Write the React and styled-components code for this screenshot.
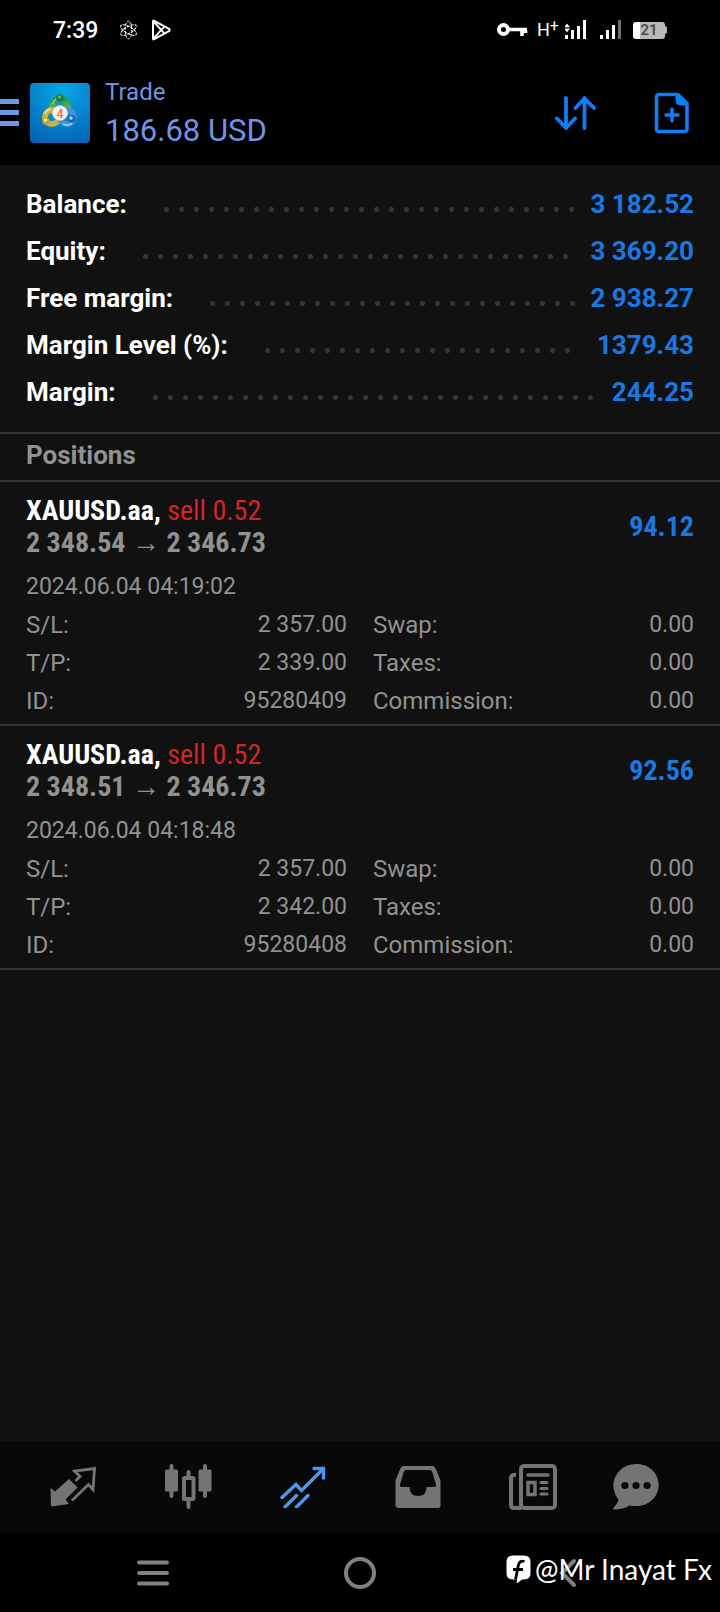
import React from "react";
import styled, { createGlobalStyle } from "styled-components";

const GlobalStyle = createGlobalStyle`
  * {
    box-sizing: border-box;
  }
  body {
    margin: 0;
    background: #111111;
    font-family: Roboto, "Noto Sans", sans-serif;
  }
  h1, h2, h3, p, dl, dd {
    margin: 0;
    font-size: inherit;
    font-weight: inherit;
  }
  svg {
    display: block;
    flex: none;
  }
`;

const Screen = styled.div`
  display: flex;
  flex-direction: column;
  min-height: 100vh;
  color: #929292;
`;

const StatusBar = styled.div`
  display: flex;
  justify-content: space-between;
  height: 60px;
  padding: 0 53px;
  background: #000;
  color: #fff;
`;

const StatusGroup = styled.div`
  display: flex;
  align-items: center;
  gap: ${({ $gap }) => $gap}px;
`;

const Clock = styled.time`
  margin-right: 8px;
  font-size: 23px;
  font-weight: 500;
`;

const NetworkType = styled.span`
  display: flex;
  width: 20px;
  font-size: 18px;
  line-height: 24px;
  sup {
    font-size: 16px;
    line-height: 16px;
  }
`;

const Battery = styled.span`
  display: flex;
  align-items: center;
  width: 36px;
  padding-left: 2px;
`;

const BatteryBody = styled.span`
  width: 32px;
  height: 17px;
  border-radius: 3px;
  background: linear-gradient(90deg, #fff 21%, #b9b9b9 21%);
  color: #4a4a4a;
  font-size: 15px;
  font-weight: 600;
  line-height: 17px;
  text-align: center;
`;

const BatteryTip = styled.span`
  width: 2px;
  height: 8px;
  border-radius: 0 2px 2px 0;
  background: #b9b9b9;
`;

const Header = styled.header`
  display: flex;
  align-items: center;
  height: 105px;
  padding-right: 24px;
  background: #000;
  color: #6f95e6;
`;

const IconButton = styled.button`
  display: flex;
  align-items: center;
  justify-content: center;
  padding: 0;
  border: 0;
  background: none;
  color: inherit;
  cursor: pointer;
`;

const Account = styled.div`
  display: flex;
  flex-direction: column;
  gap: 6px;
  margin: 2px 0 0 15px;
`;

const Title = styled.h1`
  font-size: 24px;
  line-height: 28px;
`;

const Profit = styled.p`
  font-size: 31px;
  line-height: 38px;
  white-space: nowrap;
`;

const Actions = styled.div`
  display: flex;
  gap: 49px;
  margin-left: auto;
  color: #0f7df5;
  ${IconButton} {
    width: 48px;
    height: 48px;
  }
`;

const Logo = styled.svg`
  margin-left: 11px;
  border-radius: 4px;
`;

const Content = styled.main`
  flex: 1;
`;

const Summary = styled.dl`
  padding: 16px 26px;
  border-bottom: 2px solid #343434;
`;

const SummaryRow = styled.div`
  display: flex;
  align-items: center;
  font-size: 26px;
  font-weight: 700;
  line-height: 47px;
  white-space: nowrap;
  dt {
    color: #fff;
  }
  dd {
    color: #1a78e2;
  }
`;

const Leader = styled.span`
  flex: 1;
  margin: 10px 10px 0 32px;
  &::before {
    content: "";
    display: block;
    width: round(down, 100%, 15px);
    height: 5px;
    background: radial-gradient(circle, #363636 2px, transparent 3px) 0 0 / 15px 5px;
  }
`;

const SectionTitle = styled.h2`
  height: 48px;
  padding: 0 26px;
  border-bottom: 2px solid #343434;
  font-size: 26px;
  font-weight: 700;
  line-height: 43px;
`;

const PositionCard = styled.article`
  padding: 13px 26px 4px;
  border-bottom: 2px solid #343434;
`;

const PositionHead = styled.div`
  display: flex;
  align-items: center;
  justify-content: space-between;
  margin-bottom: 9px;
  font-family: "Roboto Condensed", Roboto, sans-serif;
  font-size: 28px;
  font-weight: 700;
  line-height: 32px;
`;

const SymbolName = styled.h3`
  color: #fff;
`;

const Side = styled.span`
  color: #d32626;
  font-weight: 400;
`;

const Result = styled.p`
  color: #1a78e2;
`;

const OpenTime = styled.time`
  display: block;
  font-size: 23px;
  line-height: 38px;
`;

const Details = styled.dl`
  display: grid;
  grid-template-columns: 1fr 1fr;
  column-gap: 26px;
  font-size: 23px;
  line-height: 38px;
  div {
    display: flex;
    justify-content: space-between;
  }
  dt {
    font-size: 24px;
  }
`;

const TabBar = styled.nav`
  display: grid;
  grid-template-columns: repeat(5, 5fr) 4fr;
  height: 92px;
  padding: 0 38px 0 15px;
  background: #080808;
`;

const Tab = styled(IconButton)`
  color: ${({ $active }) => ($active ? "#4a98ee" : "#747474")};
`;

const SystemBar = styled.div`
  position: relative;
  display: flex;
  align-items: center;
  justify-content: space-between;
  height: 79px;
  padding: 0 135px;
  background: #000;
  color: #808080;
`;

const Watermark = styled.div`
  position: absolute;
  top: 20px;
  right: 8px;
  display: flex;
  align-items: center;
  gap: 4px;
  color: #fff;
  font-family: Lato, sans-serif;
  font-size: 28px;
  line-height: 32px;
  white-space: nowrap;
`;

const AtomIcon = () => (
  <svg width="17" height="20" viewBox="0 0 17 20" fill="none" stroke="#fff">
    <ellipse cx="8.5" cy="10" rx="3.4" ry="8.8" strokeDasharray="3 1" />
    <ellipse cx="8.5" cy="10" rx="3.4" ry="8.8" transform="rotate(60 8.5 10)" strokeDasharray="3 1" />
    <ellipse cx="8.5" cy="10" rx="3.4" ry="8.8" transform="rotate(-60 8.5 10)" strokeDasharray="3 1" />
  </svg>
);

const PlayIcon = () => (
  <svg width="20" height="22" viewBox="0 0 20 22" fill="none" stroke="#fff" strokeWidth="2" strokeLinejoin="round">
    <path d="M2 2.4v17.2q0 1.2 1.2.6L18 12.2q1.4-1.2 0-2.4L3.2 1.8Q2 1.2 2 2.4z" />
    <path d="M2.4 2.4 13.6 14.6M2.4 19.6 13.6 7.4" />
  </svg>
);

const KeyIcon = () => (
  <svg width="32" height="16" viewBox="0 0 32 16" fill="none" stroke="#fff">
    <circle cx="6.5" cy="7.5" r="4.5" strokeWidth="4" />
    <path d="M11 7.5h19M25 8v6M28.5 8v3" strokeWidth="3.6" />
  </svg>
);

const DataSignalIcon = () => (
  <svg width="22" height="20" viewBox="0 0 22 20" fill="#fff">
    <path d="M0 15h3v4H0zM6 10h3v9H6zM12 6h3v13h-3zM18 0h3v19h-3z" />
    <path d="M-1 7.2 2 3.5l3 3.7zM-1 8.6 2 12.2l3-3.6z" />
  </svg>
);

const SignalIcon = () => (
  <svg width="28" height="20" viewBox="0 0 28 20" fill="#fff">
    <path d="M5 15h3v4H5zM11 10h3v9h-3zM17 5h3v14h-3z" />
    <path fill="#6d6d6d" d="M23 0h3v19h-3z" />
  </svg>
);

const MenuIcon = () => (
  <svg width="19" height="27" viewBox="0 0 19 27" fill="currentColor">
    <path d="M0 0h19v5H0zM0 11h19v5H0zM0 22h19v5H0z" />
  </svg>
);

const LogoIcon = () => (
  <Logo width="60" height="60" viewBox="0 0 60 60" fill="none">
    <defs>
      <radialGradient id="sky" cx="0.55" cy="0.1" r="1">
        <stop offset="0" stopColor="#06a9e6" />
        <stop offset="1" stopColor="#0561b4" />
      </radialGradient>
      <linearGradient id="green" x2="0" y2="1">
        <stop offset="0" stopColor="#2f9a44" />
        <stop offset="1" stopColor="#8dc85c" />
      </linearGradient>
    </defs>
    <rect width="60" height="60" fill="url(#sky)" />
    <path d="M16 49h28" stroke="#0a6fc4" />
    <circle cx="30" cy="24" r="8" stroke="url(#green)" strokeWidth="6" />
    <circle cx="22" cy="34" r="7" stroke="#c3b546" strokeWidth="6" />
    <circle cx="37" cy="34" r="7" stroke="#3b93d9" strokeWidth="6" />
    <path d="M33 41q6 3 10-2" stroke="#9bd0f5" strokeWidth="1.5" />
    <path d="M15 31q2-5 6-5" stroke="#f1e690" strokeWidth="1.5" />
    <path d="M22.5 21q2-5 6-6" stroke="#a6df9a" strokeWidth="1.2" />
    <circle cx="30" cy="15" r="4" fill="#257f37" />
    <circle cx="29.5" cy="13.8" r="1.6" fill="#62bd64" />
    <circle cx="16" cy="38" r="3.8" fill="#c6a52a" />
    <circle cx="15.5" cy="37" r="1.7" fill="#f6ec9a" />
    <circle cx="42" cy="36" r="3.8" fill="#1b66b5" />
    <circle cx="41" cy="35" r="1.7" fill="#a5dbfa" />
    <circle cx="30" cy="30" r="7.6" fill="#f7f3ec" stroke="#c9c6b0" strokeWidth="0.6" />
    <text x="30" y="34.5" textAnchor="middle" fill="#ee8244" fontFamily="Roboto, sans-serif" fontSize="13" fontWeight="700">4</text>
  </Logo>
);

const SortIcon = () => (
  <svg width="42" height="36" viewBox="0 0 42 36" fill="none" stroke="currentColor" strokeWidth="3.8" strokeLinecap="round" strokeLinejoin="round">
    <path d="M12 3v30M3 23.500l9 9.500 9-9.500M30.500 33V3M21.500 13l9-9.500 9.500 9.500" />
  </svg>
);

const NewOrderIcon = () => (
  <svg width="36" height="42" viewBox="0 0 36 42" fill="none" stroke="currentColor" strokeLinejoin="round">
    <path d="M5 2.500h19l9 9V37a2.500 2.500 0 0 1-2.500 2.500h-26A2.500 2.500 0 0 1 2.500 37V5A2.500 2.500 0 0 1 5 2.500z" strokeWidth="3.600" />
    <path d="M22 3v6q0 4 4 4h7l-9-10z" fill="currentColor" strokeWidth="1" />
    <path d="M18 17v12M12 23h12" strokeWidth="3.400" strokeLinecap="round" />
  </svg>
);

const QuotesIcon = () => (
  <svg width="46" height="40" viewBox="0 0 46 40">
    <path d="M19 12 27.500 20.500 15.500 32.500 19 37 1 39.500.500 21 5 24.500z" fill="currentColor" />
    <path d="M25.500 14 30 9.500 24.500 4 44.500 1.500 43 22.500 38.500 17.500 22 33.500" fill="none" stroke="currentColor" strokeWidth="2.800" />
  </svg>
);

const ChartIcon = () => (
  <svg width="48" height="48" viewBox="0 0 48 48" fill="none" stroke="currentColor">
    <path d="M7.500 3v30M41 3v30M24.500 9v6M24.500 38v6" strokeWidth="4" strokeLinecap="round" />
    <rect x="1" y="6.500" width="13" height="22" rx="1.500" fill="currentColor" stroke="none" />
    <rect x="34.500" y="6.500" width="13" height="22" rx="1.500" fill="currentColor" stroke="none" />
    <rect x="20" y="15" width="9.500" height="21" strokeWidth="4" rx="0.500" />
  </svg>
);

const TradeIcon = () => (
  <svg width="46" height="42" viewBox="0 0 46 42" fill="none" stroke="currentColor" strokeWidth="3.400">
    <path d="M2 31.500 16 18.500 21.500 24.500 42 4" strokeLinecap="round" />
    <path d="M34 2.500h9.500V12" strokeLinecap="round" />
    <path d="M5 41 16.500 29.500M16.500 41 28 29.500" strokeLinecap="round" />
  </svg>
);

const HistoryIcon = () => (
  <svg width="46" height="42" viewBox="0 0 46 42">
    <path
      fill="currentColor"
      fillRule="evenodd"
      d="M9 0h28q2.500 0 3.600 2.400L45 13q.5 1.500.5 3v23q0 3-3 3h-39q-3 0-3-3V16q0-1.500.5-3L5.400 2.400Q6.500 0 9 0zM11 4q-1.500 0-2.200 1.700L5 18.500Q4.600 21 7 21h7.500q0 9 8.500 9t8.500-9H39q2.400 0 2-2.500L37.200 5.700Q36.500 4 35 4z"
    />
  </svg>
);

const NewsIcon = () => (
  <svg width="48" height="46" viewBox="0 0 48 46" fill="none" stroke="currentColor">
    <rect x="12" y="2" width="34" height="42" rx="3" strokeWidth="4" />
    <path d="M12 44H5q-3 0-3-3V14q0-2 2-3h3" strokeWidth="4" />
    <path d="M19 11h20" strokeWidth="3.500" strokeLinecap="round" />
    <rect x="19" y="18.500" width="7" height="12" strokeWidth="3.500" />
    <path d="M32 18.500h6M32 24.500h6M32 30h6" strokeWidth="3.200" strokeLinecap="round" />
  </svg>
);

const ChatIcon = () => (
  <svg width="46" height="46" viewBox="0 0 46 46">
    <path
      fill="currentColor"
      d="M23 0C36 0 45.500 9 45.500 21S36 42 23 42q-3 0-6-.8Q10 45.600 1 45.600q-1.500-.6-.2-2Q5 39 5.500 35.500.5 29.500.5 21 .500 9 23 0z"
    />
    <ellipse cx="23" cy="21" rx="22.500" ry="21" fill="currentColor" />
    <g fill="#080808">
      <circle cx="12" cy="21.500" r="3.600" />
      <circle cx="23" cy="21.500" r="3.600" />
      <circle cx="34" cy="21.500" r="3.600" />
    </g>
  </svg>
);

const RecentsIcon = () => (
  <svg width="36" height="26" viewBox="0 0 36 26" stroke="currentColor" strokeWidth="4" strokeLinecap="round">
    <path d="M4 2.500h28M4 13h28M4 23.500h28" />
  </svg>
);

const HomeIcon = () => (
  <svg width="32" height="32" viewBox="0 0 32 32" fill="none" stroke="currentColor" strokeWidth="4">
    <circle cx="16" cy="16" r="14" />
  </svg>
);

const BackIcon = () => (
  <svg width="36" height="30" viewBox="0 0 36 30" fill="none" stroke="currentColor" strokeWidth="4" strokeLinecap="round">
    <path d="M25 3 13 15l12 12" />
  </svg>
);

const FacebookIcon = () => (
  <svg width="25" height="28" viewBox="0 0 25 28">
    <path
      fill="#fff"
      d="M7 .500h11Q24.500.500 24.500 7v11q0 6.500-6.500 6.500h-2L11.500 28q-1 .3-.8-.8l.5-2.700H7Q.500 24.500.500 18V7Q.500.500 7 .500z"
    />
    <path d="M18.500 6.500q-5-1.500-6.200 4L9.500 24.500M7 14.500h10" fill="none" stroke="#000" strokeWidth="2.800" />
  </svg>
);

const summary = [
  { label: "Balance:", value: "3 182.52" },
  { label: "Equity:", value: "3 369.20" },
  { label: "Free margin:", value: "2 938.27" },
  { label: "Margin Level (%):", value: "1379.43" },
  { label: "Margin:", value: "244.25" },
];

const positions = [
  {
    id: "95280409",
    open: "2 348.54",
    current: "2 346.73",
    profit: "94.12",
    time: "2024.06.04 04:19:02",
    takeProfit: "2 339.00",
  },
  {
    id: "95280408",
    open: "2 348.51",
    current: "2 346.73",
    profit: "92.56",
    time: "2024.06.04 04:18:48",
    takeProfit: "2 342.00",
  },
];

const tabs = [
  { label: "Quotes", Icon: QuotesIcon },
  { label: "Charts", Icon: ChartIcon },
  { label: "Trade", Icon: TradeIcon, active: true },
  { label: "History", Icon: HistoryIcon },
  { label: "News", Icon: NewsIcon },
  { label: "Messages", Icon: ChatIcon },
];

const Position = ({ position }) => {
  const details = [
    ["S/L:", "2 357.00"],
    ["Swap:", "0.00"],
    ["T/P:", position.takeProfit],
    ["Taxes:", "0.00"],
    ["ID:", position.id],
    ["Commission:", "0.00"],
  ];

  return (
    <PositionCard>
      <PositionHead>
        <div>
          <SymbolName>
            XAUUSD.aa, <Side>sell 0.52</Side>
          </SymbolName>
          <p>
            {position.open} → {position.current}
          </p>
        </div>
        <Result>{position.profit}</Result>
      </PositionHead>
      <OpenTime>{position.time}</OpenTime>
      <Details>
        {details.map(([label, value]) => (
          <div key={label}>
            <dt>{label}</dt>
            <dd>{value}</dd>
          </div>
        ))}
      </Details>
    </PositionCard>
  );
};

const App = () => (
  <Screen>
    <GlobalStyle />
    <StatusBar>
      <StatusGroup $gap={14}>
        <Clock>7:39</Clock>
        <AtomIcon />
        <PlayIcon />
      </StatusGroup>
      <StatusGroup $gap={8}>
        <KeyIcon />
        <NetworkType>
          H<sup>+</sup>
        </NetworkType>
        <DataSignalIcon />
        <SignalIcon />
        <Battery>
          <BatteryBody>21</BatteryBody>
          <BatteryTip />
        </Battery>
      </StatusGroup>
    </StatusBar>
    <Header>
      <IconButton aria-label="Menu">
        <MenuIcon />
      </IconButton>
      <LogoIcon />
      <Account>
        <Title>Trade</Title>
        <Profit>186.68 USD</Profit>
      </Account>
      <Actions>
        <IconButton aria-label="Sort">
          <SortIcon />
        </IconButton>
        <IconButton aria-label="New order">
          <NewOrderIcon />
        </IconButton>
      </Actions>
    </Header>
    <Content>
      <Summary>
        {summary.map(({ label, value }) => (
          <SummaryRow key={label}>
            <dt>{label}</dt>
            <Leader />
            <dd>{value}</dd>
          </SummaryRow>
        ))}
      </Summary>
      <SectionTitle>Positions</SectionTitle>
      {positions.map((position) => (
        <Position key={position.id} position={position} />
      ))}
    </Content>
    <TabBar>
      {tabs.map(({ label, Icon, active }) => (
        <Tab key={label} aria-label={label} $active={active}>
          <Icon />
        </Tab>
      ))}
    </TabBar>
    <SystemBar>
      <IconButton aria-label="Recent apps">
        <RecentsIcon />
      </IconButton>
      <IconButton aria-label="Home">
        <HomeIcon />
      </IconButton>
      <IconButton aria-label="Back">
        <BackIcon />
      </IconButton>
      <Watermark>
        <FacebookIcon />
        @Mr Inayat Fx
      </Watermark>
    </SystemBar>
  </Screen>
);

export default App;
